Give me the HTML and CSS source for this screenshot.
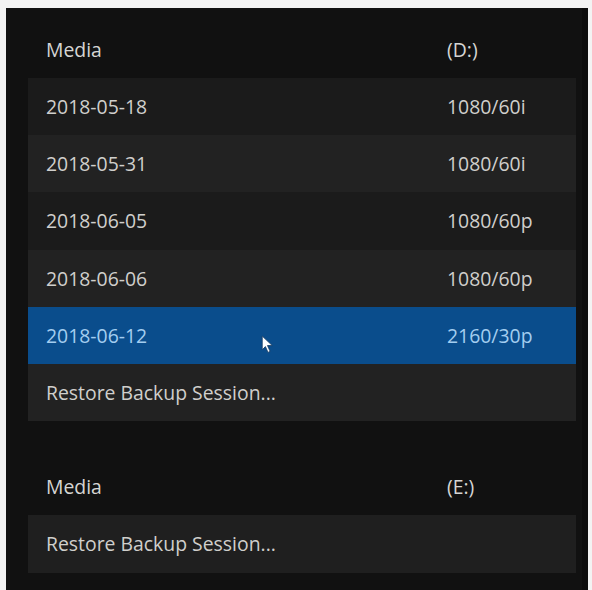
FILE: index.html
```html
<!DOCTYPE html>
<html lang="en">
<head>
    <meta charset="UTF-8">
    <title>Sessions</title>
    <link rel="stylesheet" href="styles.css">
</head>
<body>

    <!-- Session browser panel -->
    <div class="panel">

        <!-- Drive D -->
        <div class="drive">
            <div class="row header first">
                <span>Media</span>
                <span>(D:)</span>
            </div>
            <div class="row odd">
                <span>2018-05-18</span>
                <span>1080/60i</span>
            </div>
            <div class="row even">
                <span>2018-05-31</span>
                <span>1080/60i</span>
            </div>
            <div class="row odd">
                <span>2018-06-05</span>
                <span>1080/60p</span>
            </div>
            <div class="row even">
                <span>2018-06-06</span>
                <span>1080/60p</span>
            </div>
            <div class="row selected">
                <span>2018-06-12</span>
                <span>2160/30p</span>
                <svg class="cursor" width="13" height="19" viewBox="0 0 12 18">
                    <path d="M1 1 L1 14 L4 11 L6.5 16.5 L8.5 15.5 L6 10 L10.5 10 Z" fill="#fff" stroke="#1a3f66" stroke-width="0.8"/>
                </svg>
            </div>
            <div class="row even">
                <span>Restore Backup Session...</span>
            </div>
        </div>

        <!-- Drive E -->
        <div class="drive second">
            <div class="row header">
                <span>Media</span>
                <span>(E:)</span>
            </div>
            <div class="row restore">
                <span>Restore Backup Session...</span>
            </div>
        </div>

    </div>

</body>
</html>
```

FILE: styles.css
```css
/* General styles */
body {
    margin: 0;
    padding: 0;
    background-color: #f3f3f3;
    font-family: "Segoe UI", "Open Sans", "Noto Sans", sans-serif;
}

/* Panel */
.panel {
    margin: 8px 4px 0 6px;
    height: 582px;
    background-color: #111111;
    box-sizing: border-box;
    padding: 0 6px 0 22px;
    border-right: 6px solid #0c0c0c;
}

.drive.second {
    margin-top: 37px;
}

/* Rows */
.row {
    position: relative;
    display: grid;
    grid-template-columns: 401px 1fr;
    align-items: center;
    height: 57.2px;
    padding-left: 18px;
    font-size: 19.4px;
    color: #d0cfcc;
}

.row.header {
    background-color: #111111;
    color: #d6d6d4;
}

.row.first {
    height: 70px;
    padding-top: 13px;
    box-sizing: border-box;
}

.row.odd {
    background-color: #1b1b1b;
}

.row.even {
    background-color: #222222;
}

.row.restore {
    background-color: #1f1f1f;
}

.row.selected {
    background-color: #0a4d8c;
    color: #a3cdf0;
}

/* Mouse pointer */
.cursor {
    position: absolute;
    left: 233px;
    top: 28px;
}
```
